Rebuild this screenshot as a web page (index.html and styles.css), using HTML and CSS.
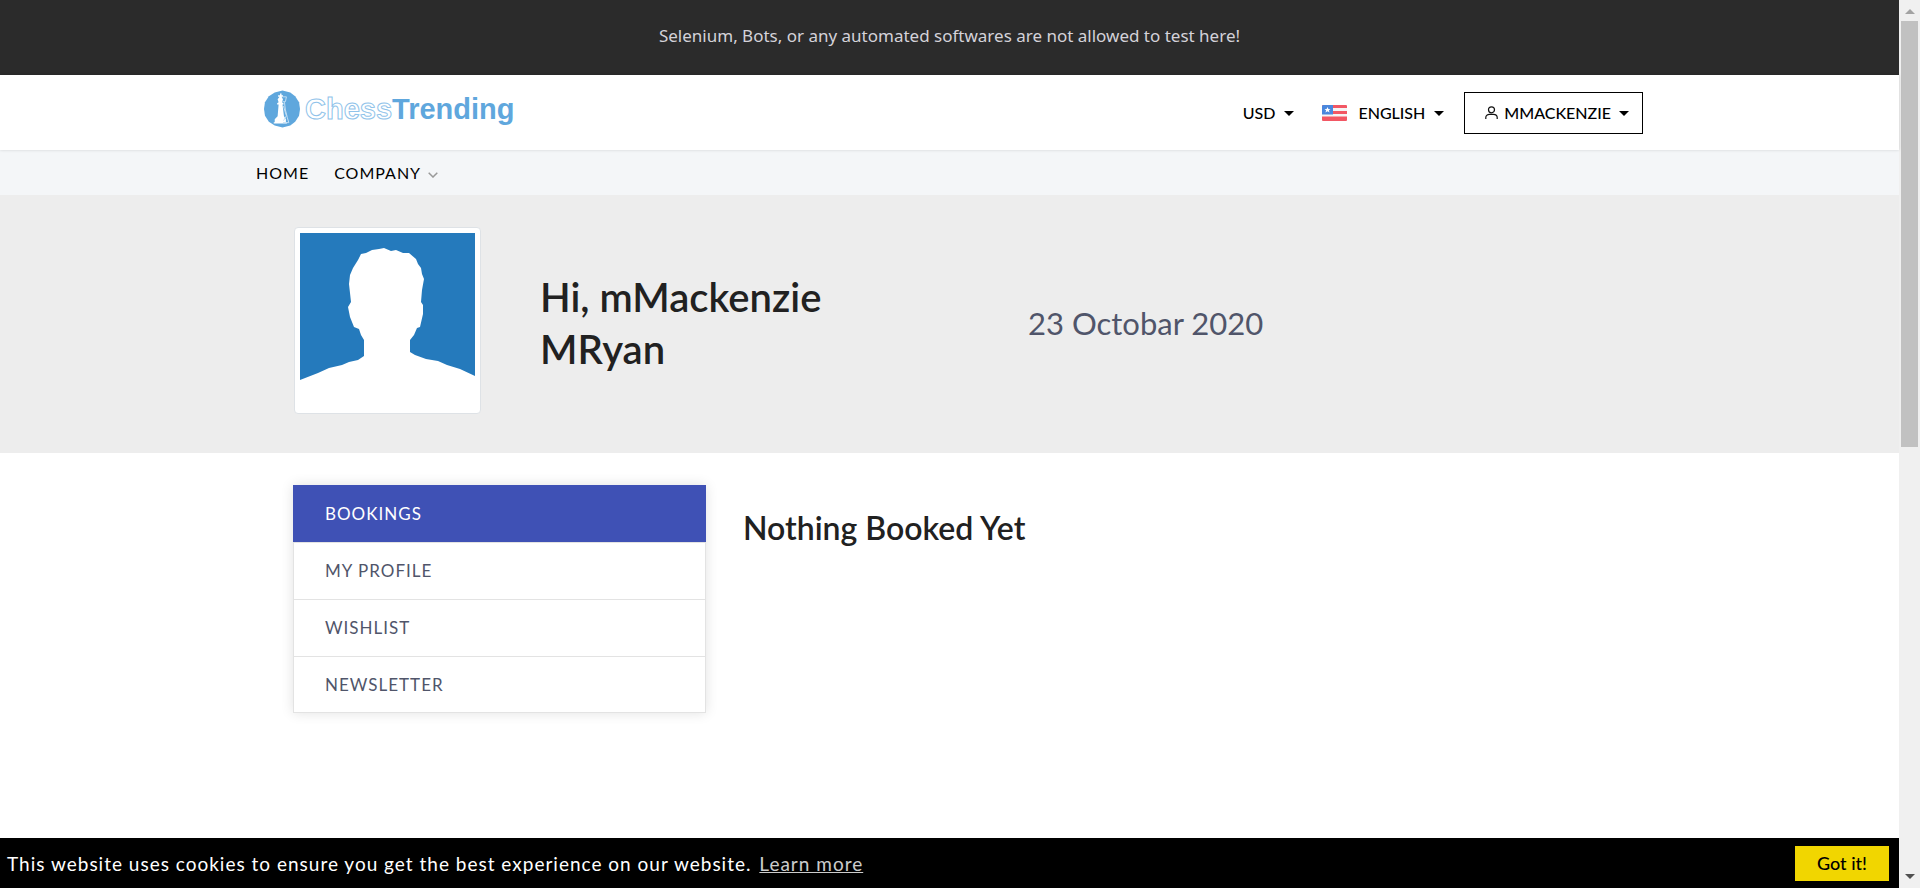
FILE: index.html
```html
<!DOCTYPE html>
<html lang="en">
<head>
<meta charset="utf-8">
<title>ChessTrending - Bookings</title>
<link rel="stylesheet" href="styles.css">
</head>
<body>
<div class="page">
  <div class="notice">Selenium, Bots, or any automated softwares are not allowed to test here!</div>

  <header class="header">
    <div class="container header-row">
      <a class="logo" href="#" aria-label="ChessTrending">
        <svg class="logo-mark" viewBox="0 0 38 38" aria-hidden="true">
          <path fill="#5fa7dd" d="M19 0 27 2 32 6 36 12 37 19 36 26 32 32 27 36 19 38 11 36 5 32 1 26 0 19 1 12 5 6 11 2Z"/>
          <path fill="#fff" d="M16.500 3h1.500v2h1.500v1.500h-1.500l1.500 2.500-1 3 1.500 1v1.500h-1l1.500 12 2 3v3h1v1.500H10v-1.500h1v-3l3-3 1-12h-1.500V13l1.500-1-1-3 2-2.500H14.500V5h2Z"/>
          <path fill="none" stroke="#c4e0f5" stroke-width="1" d="M19 6.500h4l-1 5h-3M21 12l1 8 2 8 1.500 5h-6M20 16l3 10-3 5"/>
        </svg>
        <span class="logo-text"><span class="logo-outline">Chess</span><span>Trending</span></span>
      </a>
      <div class="tools">
        <button class="drop" type="button">USD <span class="caret"></span></button>
        <button class="drop" type="button">
          <svg class="flag" viewBox="0 0 25 16" aria-hidden="true">
            <rect width="25" height="16" rx="1" fill="#f25764"/>
            <path fill="#f5f5f5" d="M0 3h25v3H0ZM0 9h25v2.500H0Z"/>
            <path fill="#4a87dd" d="M1 0h10v9.500H0V1Z"/>
            <path fill="#fff" d="m5.500 2 .9 2H8.500L6.900 5.300l.6 2.200-2-1.200-2 1.200.6-2.200L2.500 4h2.100Z"/>
          </svg>
          ENGLISH <span class="caret"></span>
        </button>
        <button class="drop account" type="button">
          <svg class="user" viewBox="0 0 13 14" aria-hidden="true" fill="none" stroke="#111" stroke-width="1.200"><circle cx="6.500" cy="3.800" r="3"/><path d="M.8 13V11.500C.8 9.500 2.500 8.300 4.500 8.300h4c2 0 3.700 1.200 3.700 3.200V13"/></svg>
          MMACKENZIE <span class="caret"></span>
        </button>
      </div>
    </div>
  </header>

  <nav class="nav">
    <div class="container nav-row">
      <a href="#">HOME</a>
      <a href="#">COMPANY <svg class="chevron" viewBox="0 0 10 6" aria-hidden="true"><path d="m.7.7 4.300 4.300L9.300.7" fill="none" stroke="#999" stroke-width="1.500"/></svg></a>
    </div>
  </nav>

  <section class="hero">
    <div class="container hero-row">
      <div class="avatar">
        <svg viewBox="0 0 175 175" role="img" aria-label="Profile picture">
          <rect width="175" height="175" fill="#fff"/>
          <path fill="#257abc" d="M0 0H175V143L160 136 147 132 138 128 126 126 115 122 110 119V107L114 102 117 95 120 94 123 81V72L121 69 122 57 124 46 122 41 121 35 118 31 116 26 109 20 103 20 96 17 91 18 84 15 79 16 72 17 66 20 61 21 58 27 53 35 50 42 49 51 50 60 51 69 48 74 50 84 54 94 59 96 61 102 64 107V123L58 127 49 129 42 132 29 135 18 140 0 147Z"/>
        </svg>
      </div>
      <h1 class="greeting">Hi, mMackenzie MRyan</h1>
      <p class="date">23 Octobar 2020</p>
    </div>
  </section>

  <main class="container content">
    <nav class="side" aria-label="Account">
      <a class="active" href="#">BOOKINGS</a>
      <a href="#">MY PROFILE</a>
      <a href="#">WISHLIST</a>
      <a href="#">NEWSLETTER</a>
    </nav>
    <h2 class="empty">Nothing Booked Yet</h2>
  </main>

  <div class="cookie">
    <p>This website uses cookies to ensure you get the best experience on our website. <a href="#">Learn more</a></p>
    <button type="button">Got it!</button>
  </div>
</div>
<div class="scrollbar" aria-hidden="true">
  <span class="arrow up"></span>
  <span class="thumb"></span>
  <span class="arrow down"></span>
</div>
</body>
</html>
```

FILE: styles.css
```css
* { box-sizing: border-box; }
body {
  margin: 0;
  display: flex;
  height: 100vh;
  overflow: hidden;
  background: #fff;
  color: #212121;
  font-family: Lato, "Noto Sans", sans-serif;
  font-size: 17px;
}
h1, h2, p { margin: 0; }
a { color: inherit; text-decoration: none; }
button { font: inherit; color: inherit; border: 0; background: none; padding: 0; cursor: pointer; }
svg { display: block; }

.page { flex: 1; min-width: 0; display: flex; flex-direction: column; }
.container { width: 100%; max-width: 1387px; margin: 0 auto; }

.notice {
  padding: 22px 24px 26px;
  line-height: 27px;
  text-align: center;
  background: #2b2b2b;
  color: #d4d2d9;
  font-family: "Noto Sans", sans-serif;
}

.header { background: #fff; position: relative; box-shadow: 0 0 3px rgba(0, 0, 0, .15); }
.header-row { height: 75px; display: flex; align-items: center; justify-content: space-between; }
.logo { display: flex; align-items: center; gap: 4px; padding: 0 0 8px 8px; }
.logo-mark { width: 37px; height: 38px; }
.logo-text { font: bold 29px/32px "Liberation Sans", Arial, sans-serif; color: #5fa7dd; }
.logo-outline { color: #fff; -webkit-text-stroke: 1px #8fc3ea; }
.tools { display: flex; align-items: center; gap: 20px; padding-top: 1px; color: #000; font-size: 16px; font-weight: 500; }
.drop { display: flex; align-items: center; gap: 9px; line-height: 24px; }
.drop:first-child { margin-right: 8px; }
.caret { border: 5px solid transparent; border-top-color: #000; border-bottom: 0; }
.flag { width: 25px; height: 16px; margin-right: 2px; }
.account { height: 42px; padding: 0 13px 0 20px; border: 1px solid #000; gap: 6px; }
.account .caret { margin-left: 2px; }
.user { width: 13px; height: 14px; }

.nav { background: #f4f6f8; color: #000; }
.nav-row { display: flex; gap: 25px; line-height: 45px; letter-spacing: 1px; font-size: 16px; }
.nav-row a { display: flex; align-items: center; gap: 7px; }
.chevron { width: 10px; height: 6px; margin-top: 5px; }

.hero { background: #ededed; padding: 32px 0 39px; }
.hero-row { display: grid; grid-template-columns: 187px 429px 1fr; column-gap: 59px; align-items: center; padding: 0 38px; }
.avatar { padding: 5px; border: 1px solid #dee2e6; border-radius: 4px; background: #fff; }
.greeting { max-width: 320px; padding-top: 4px; font-size: 40px; line-height: 52px; font-weight: 600; }
.date { padding-top: 4px; font-size: 31px; line-height: 40px; color: #50556a; }

.content { flex: 1; display: grid; grid-template-columns: 413px 1fr; gap: 37px; align-items: start; padding: 32px 37px; }
.side { border: 1px solid #e3e3e3; border-top: 0; box-shadow: 0 0 12px rgba(0, 0, 0, .12); background: #fff; }
.side a { display: block; padding: 0 31px; line-height: 56px; letter-spacing: 1px; color: #50556a; }
.side a + a { border-top: 1px solid #e3e3e3; }
.side .active { margin: 0 -1px; padding: 0 32px; line-height: 57px; background: #3f51b5; color: #fff; }
.side a:last-child { line-height: 55px; }
.empty { padding-top: 23px; font-size: 32px; line-height: 40px; font-weight: 600; }

.cookie { display: flex; align-items: center; justify-content: space-between; height: 50px; padding: 0 10px 0 7px; background: #000; color: #fff; letter-spacing: 1px; font-size: 19px; }
.cookie a { margin-left: 2px; opacity: .8; text-decoration: underline; }
.cookie button { width: 94px; height: 35px; background: #f1d600; color: #000; letter-spacing: 0; font-size: 18px; font-weight: 500; }

.scrollbar { width: 21px; padding: 9px 2px; background: #f0f0f0; display: flex; flex-direction: column; align-items: center; }
.thumb { width: 17px; height: 426px; margin-top: 7px; background: #c1c1c1; }
.arrow { border: 5px solid transparent; }
.up { border-top: 0; border-bottom-color: #a3a3a3; }
.down { margin-top: auto; border-bottom: 0; border-top-color: #505050; }
```
